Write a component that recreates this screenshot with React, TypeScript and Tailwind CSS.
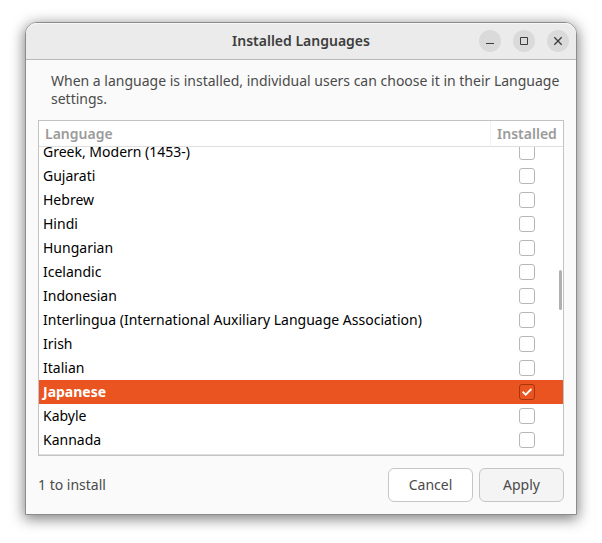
import { useLayoutEffect, useRef, useState } from 'react';

const languages = [
  'Greek, Modern (1453-)',
  'Gujarati',
  'Hebrew',
  'Hindi',
  'Hungarian',
  'Icelandic',
  'Indonesian',
  'Interlingua (International Auxiliary Language Association)',
  'Irish',
  'Italian',
  'Japanese',
  'Kabyle',
  'Kannada',
];

function TitleBar() {
  const button = 'flex size-[22px] items-center justify-center rounded-full bg-[#dadada]';

  return (
    <header className="grid h-[37px] grid-cols-[1fr_auto_1fr] items-center rounded-t-[11px] border-b border-[#b9b9b9] bg-[#ebebeb] px-[7px] shadow-[inset_0_1px_0_#f7f7f7]">
      <h1 className="col-start-2 text-[14px] font-semibold text-[#3d3d3d]">Installed Languages</h1>
      <div className="flex justify-end gap-3">
        <button type="button" aria-label="Minimize" className={button}>
          <svg width="16" height="16" viewBox="0 0 16 16" fill="#3d3d3d">
            <path d="M4 10h8v1H4z" />
          </svg>
        </button>
        <button type="button" aria-label="Maximize" className={button}>
          <svg width="16" height="16" viewBox="0 0 16 16" fill="none" stroke="#3d3d3d">
            <path d="M4.5 4.5h7v7h-7z" />
          </svg>
        </button>
        <button type="button" aria-label="Close" className={button}>
          <svg width="16" height="16" viewBox="0 0 16 16" fill="none" stroke="#3d3d3d" strokeWidth="1.3">
            <path d="M4.3 4.3l7.4 7.4M11.7 4.3l-7.4 7.4" />
          </svg>
        </button>
      </div>
    </header>
  );
}

export default function App() {
  const [installed, setInstalled] = useState<string[]>(['Japanese']);
  const [selected, setSelected] = useState('Japanese');
  const listRef = useRef<HTMLDivElement>(null);

  useLayoutEffect(() => {
    if (listRef.current) listRef.current.scrollTop = 7;
  }, []);

  const toggle = (name: string) => {
    setInstalled((prev) => (prev.includes(name) ? prev.filter((n) => n !== name) : [...prev, name]));
  };

  return (
    <div className="min-h-screen bg-white px-[25px] pt-[22px] pb-7 font-['Noto_Sans','Open_Sans',sans-serif] text-[14px] leading-[18px] text-[#4a4a4a]">
      <main className="rounded-t-xl border border-[#8c8c8c] bg-[#fafafa] shadow-[0_3px_14px_1px_rgba(0,0,0,0.5)]">
        <TitleBar />

        <div className="px-3 pt-3 pb-3">
          <p className="pl-[13px]">
            When a language is installed, individual users can choose it in their Language settings.
          </p>

          <div className="relative mt-3 border border-[#c3c3c3] bg-white">
            <div ref={listRef} className="h-[334px] overflow-y-auto pb-[3px] [scrollbar-width:none]">
              <table className="w-full border-separate border-spacing-0 text-left text-black">
                <thead className="sticky top-0 z-10 bg-white text-[#9b9b9b]">
                  <tr className="h-[26px]">
                    <th className="border-b border-[#dedede] p-0 pl-1.5 font-semibold">Language</th>
                    <th className="w-[73px] border-b border-l border-b-[#dedede] border-l-[#f2f2f2] p-0 text-center font-semibold">
                      Installed
                    </th>
                  </tr>
                </thead>
                <tbody>
                  {languages.map((name) => (
                    <tr
                      key={name}
                      onClick={() => setSelected(name)}
                      className={name === selected ? 'h-6 bg-[#e95420] font-bold text-white' : 'h-6'}
                    >
                      <td className="p-0 pl-1">
                        <label htmlFor={name}>{name}</label>
                      </td>
                      <td className="p-0">
                        <span className="relative mx-auto block size-4">
                          <input
                            id={name}
                            type="checkbox"
                            checked={installed.includes(name)}
                            onChange={() => toggle(name)}
                            className={
                              name === selected
                                ? 'block size-4 appearance-none rounded-[3px] border border-[#a83409] bg-[#e95420]'
                                : 'block size-4 appearance-none rounded-[3px] border border-[#b8b8b8] bg-white'
                            }
                          />
                          {installed.includes(name) && (
                            <svg
                              className={
                                name === selected
                                  ? 'pointer-events-none absolute inset-0 text-white'
                                  : 'pointer-events-none absolute inset-0 text-[#e95420]'
                              }
                              width="16"
                              height="16"
                              viewBox="0 0 16 16"
                              fill="none"
                              stroke="currentColor"
                              strokeWidth="1.8"
                            >
                              <path d="M3.6 7.7l3.1 3L12.4 5" />
                            </svg>
                          )}
                        </span>
                      </td>
                    </tr>
                  ))}
                </tbody>
              </table>
            </div>
            <div className="absolute inset-x-0 bottom-0 h-px bg-[#dedede]" />
            <div className="absolute top-[149px] right-px h-10 w-[3px] rounded-full bg-[#b0b0b0]" />
          </div>

          <div className="mt-3 flex items-center gap-1.5">
            <span className="flex-1">1 to install</span>
            <button type="button" className="h-[34px] w-[85px] rounded-md border border-[#c6c6c6] bg-white">
              Cancel
            </button>
            <button type="button" className="h-[34px] w-[85px] rounded-md border border-[#c6c6c6] bg-[#f4f4f4]">
              Apply
            </button>
          </div>
        </div>
      </main>
    </div>
  );
}
